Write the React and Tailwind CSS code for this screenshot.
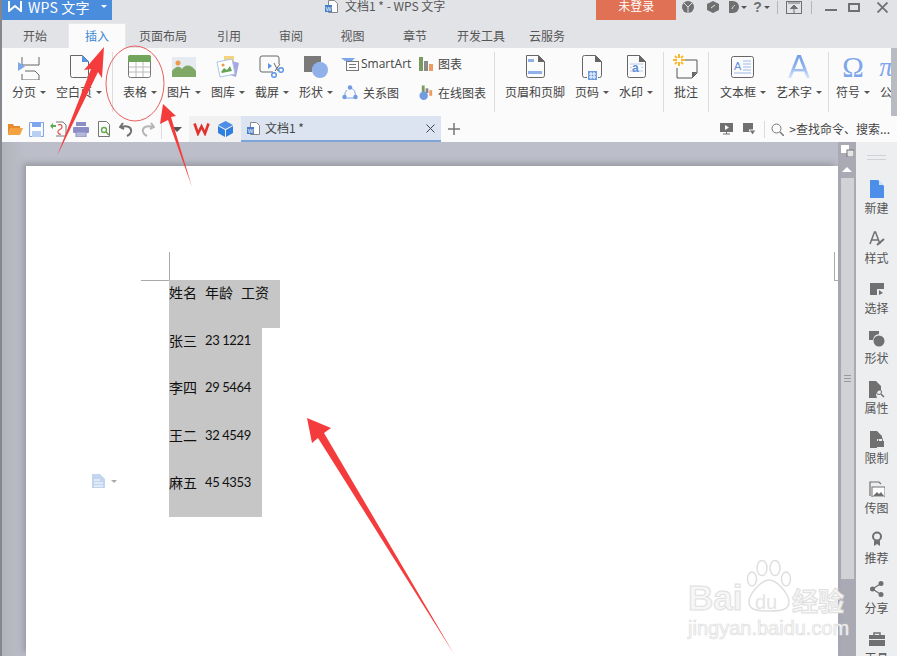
import React from "react";

const FONT = "[font-family:'Noto_Sans_CJK_SC','Liberation_Sans',sans-serif]";

function Caret({ className = "" }) {
  return <span className={`inline-block w-0 h-0 border-l-[3px] border-r-[3px] border-t-[3px] border-l-transparent border-r-transparent border-t-[#555] ${className}`} />;
}

function Svg({ w = 26, h = 26, vb, children, className = "" }) {
  return (
    <svg width={w} height={h} viewBox={vb || `0 0 ${w} ${h}`} className={`block shrink-0 ${className}`} fill="none">
      {children}
    </svg>
  );
}

const icons = {
  page: (
    <Svg w={24} h={26}>
      <path d="M5 3v8M22 3v8H5" stroke="#666" strokeWidth="1" />
      <path d="M1 8l7 4.500-7 4.500z" fill="#7ea6ea" />
      <path d="M8 17h10l4 4v5H5v-6" stroke="#666" strokeWidth="1" />
    </Svg>
  ),
  blank: (
    <Svg w={22} h={26}>
      <path d="M2.500 1.500h12l6 6v14a2 2 0 0 1-2 2h-14a2 2 0 0 1-2-2z" stroke="#666" />
      <path d="M14 1l7 7h-7z" fill="#5b93e6" />
    </Svg>
  ),
  table: (
    <Svg w={24} h={24}>
      <rect x="0.500" y="0.500" width="22" height="22" rx="2" fill="#fff" stroke="#777" />
      <path d="M0 2a2 2 0 0 1 2-2h19a2 2 0 0 1 2 2v5H0z" fill="#71a55c" />
      <path d="M1 12h21M1 17h21M8 7v15M15 7v15" stroke="#bbb" />
    </Svg>
  ),
  picture: (
    <Svg w={24} h={20}>
      <rect width="24" height="20" fill="#e6ebf2" />
      <circle cx="6" cy="6" r="2.500" fill="#f09a4f" />
      <path d="M0 20v-6c3-4 7-6 10-2 3-5 9-5 14 2v6z" fill="#7fa866" />
    </Svg>
  ),
  gallery: (
    <Svg w={24} h={24}>
      <path d="M8 1h10v14H8z" fill="#f5d27c" />
      <path d="M16 6l7 2-3 14-6-2z" fill="#a6a6e0" />
      <path d="M1 7l15-3 3 15-15 3z" fill="#fff" stroke="#aac4e8" />
      <path d="M5 17l3-4 3 2 3-4 2 5-10 2z" fill="#68a457" />
      <circle cx="7" cy="10" r="1.600" fill="#ef9b4f" />
    </Svg>
  ),
  screenshot: (
    <Svg w={26} h={24}>
      <path d="M14 17H3a2 2 0 0 1-2-2V3a2 2 0 0 1 2-2h15a2 2 0 0 1 2 2v6" stroke="#666" />
      <path d="M9 8l4 3-4 3z" fill="#5b93e6" />
      <path d="M15 8l4 8M21 9l-5 7" stroke="#666" />
      <circle cx="15" cy="20" r="2.300" stroke="#5b93e6" strokeWidth="1.400" />
      <circle cx="22" cy="15" r="2.300" stroke="#5b93e6" strokeWidth="1.400" />
    </Svg>
  ),
  shape: (
    <Svg w={26} h={24}>
      <path d="M1 1h17v6a9 9 0 0 0-9 10H1z" fill="#7a7a7a" />
      <circle cx="17" cy="15" r="8" fill="#8fb0e8" />
    </Svg>
  ),
  header: (
    <Svg w={22} h={26}>
      <path d="M2.500 1.500h12l6 6v14a2 2 0 0 1-2 2h-14a2 2 0 0 1-2-2z" stroke="#666" />
      <path d="M14 1l7 7h-7z" fill="#666" />
      <path d="M4 5h6v3H4zM4 17h14v3H4z" fill="#8fb0e8" />
    </Svg>
  ),
  pagenum: (
    <Svg w={22} h={26}>
      <path d="M6 23.500H3.500a2 2 0 0 1-2-2v-18a2 2 0 0 1 2-2h11l6 6v14a2 2 0 0 1-2 2H17" stroke="#666" />
      <path d="M14 1l7 7h-7z" fill="#666" />
      <rect x="7" y="17" width="9" height="9" fill="#6f9be0" />
      <path d="M10 18v7M13 18v7M8 20h7M8 23h7" stroke="#fff" />
    </Svg>
  ),
  watermark: (
    <Svg w={22} h={26}>
      <path d="M2.500 1.500h12l6 6v14a2 2 0 0 1-2 2h-14a2 2 0 0 1-2-2z" stroke="#666" />
      <path d="M14 1l7 7h-7z" fill="#666" />
      <path d="M5 10h13M5 17h13M5 13.500h2M16 13.500h2" stroke="#b9cdf0" />
      <text x="7" y="18" fontSize="12" fontWeight="700" fill="#5f8fd8" fontFamily="Liberation Sans">a</text>
    </Svg>
  ),
  comment: (
    <Svg w={26} h={26}>
      <path d="M9 6h15v13l-5 5H4V14" stroke="#555" />
      <path d="M24 18h-5v6z" fill="#666" />
      <g stroke="#f5b82e" strokeWidth="2">
        <path d="M6 0v4M6 8v4M0 6h4M8 6h4M2 2l2 2M8 8l2 2M10 2L8 4M4 8l-2 2" />
      </g>
    </Svg>
  ),
  textbox: (
    <Svg w={24} h={22}>
      <rect x="0.500" y="0.500" width="22" height="21" rx="2" stroke="#666" />
      <text x="3" y="14" fontSize="11" fill="#5f8fd8" fontFamily="Liberation Sans">A</text>
      <path d="M12 5h8M12 8h8M12 11h8M12 14h8M3 17h17" stroke="#9cb9e8" />
    </Svg>
  ),
  arttext: (
    <span className="block text-[33px] leading-[26px] text-transparent bg-clip-text bg-gradient-to-b from-[#6f9de6] via-[#8db2ee] to-[#e8effb] [font-family:'Liberation_Sans',sans-serif]">A</span>
  ),
  omega: (
    <span className="block text-[29px] leading-[26px] text-[#7ea6ea] [font-family:'Liberation_Serif',serif]">Ω</span>
  ),
  formula: (
    <span className="block text-[27px] leading-[26px] italic text-[#7ea6ea] [font-family:'Liberation_Serif',serif]">π</span>
  ),
};

function RibbonItem({ w, icon, label, caret = true, iconClass = "", className = "" }) {
  return (
    <div className={`flex flex-col items-center shrink-0 ${className}`} style={{ width: w }}>
      <div className={`h-[30px] flex items-center justify-center ${iconClass}`}>{icon}</div>
      <div className="mt-[1px] h-[18px] flex items-center gap-[4px] text-[12px] text-[#444] whitespace-nowrap">
        {label}
        {caret && <Caret />}
      </div>
    </div>
  );
}

function Sep({ className = "" }) {
  return <div className={`w-px self-stretch bg-[#dcdcdc] shrink-0 ${className}`} />;
}

function SmallRow({ icon, label, latin }) {
  return (
    <div className="h-[18px] flex items-center gap-[4px] text-[12px] text-[#444] whitespace-nowrap">
      {icon}
      <span className={latin ? "[font-family:'Open_Sans',sans-serif] text-[12px] -ml-[2px]" : ""}>{label}</span>
    </div>
  );
}

function Tab({ w, label, active }) {
  return (
    <div
      className={`h-full flex items-center justify-center text-[12px] shrink-0 ${active ? "bg-[#fbfbfb] text-[#3b87d4] border border-b-0 border-[#e8e8ea]" : "text-[#555]"}`}
      style={{ width: w }}
    >
      {label}
    </div>
  );
}

function SideItem({ icon, label }) {
  return (
    <div className="h-[50px] shrink-0 flex flex-col items-center">
      <div className="h-[20px] flex items-center justify-center">{icon}</div>
      <div className="text-[12px] leading-[16px] text-[#555] mt-[1px]">{label}</div>
    </div>
  );
}

const G = "#707070";
const side = [
  ["新建", <Svg w={14} h={18}><path d="M0 0h8l6 6v12H0z" fill="#4d8fe8" /><path d="M9 0l5 5H9z" fill="#cfe0f7" /></Svg>],
  ["样式", <Svg w={16} h={16}><path d="M1 13L5.500 1h1L11 13M3 9h6" stroke={G} strokeWidth="1.500" /><path d="M8 14l7-6" stroke={G} strokeWidth="2" /></Svg>],
  ["选择", <Svg w={14} h={12}><path d="M0 0h14v6H9l-2 0v6H0z" fill={G} /><path d="M9 7l4 3-4 2z" fill={G} /></Svg>],
  ["形状", <Svg w={16} h={16}><path d="M0 0h10v3a7 7 0 0 0-6 6H0z" fill={G} /><circle cx="10" cy="10" r="5.500" fill={G} /></Svg>],
  ["属性", <Svg w={16} h={17}><path d="M0 0h7l5 5v4a5 5 0 0 0-4 8H0z" fill={G} /><circle cx="10" cy="11" r="2.500" stroke={G} /><path d="M12 13l3 3" stroke={G} strokeWidth="1.500" /></Svg>],
  ["限制", <Svg w={14} h={17}><path d="M0 0h7l5 5v3H7v9H0z" fill={G} /><rect x="7" y="10" width="7" height="6" fill={G} /><path d="M8.500 10V8.500a2 2 0 0 1 4 0V10" stroke={G} /></Svg>],
  ["传图", <Svg w={16} h={16}><path d="M1 15V1h9l2 2" stroke={G} strokeWidth="1.200" /><rect x="3" y="6" width="13" height="10" fill="#fff" stroke={G} /><path d="M4 15l4-4 2 2 2-2 3 4z" fill={G} /></Svg>],
  ["推荐", <Svg w={12} h={16}><circle cx="6" cy="5.500" r="4" stroke={G} strokeWidth="2" /><path d="M3 9.500V15l3-2 3 2V9.500" fill={G} /></Svg>],
  ["分享", <Svg w={14} h={16}><circle cx="11" cy="2.500" r="2.500" fill={G} /><circle cx="2.500" cy="8" r="2.500" fill={G} /><circle cx="11" cy="13.500" r="2.500" fill={G} /><path d="M11 2.500L2.500 8l8.500 5.500" stroke={G} strokeWidth="1.200" /></Svg>],
  ["工具", <Svg w={16} h={14}><path d="M5 3V1h6v2" stroke={G} strokeWidth="1.500" /><path d="M0 3h16v4H0zM0 8h16v6H0z" fill={G} /></Svg>],
];

function DocIcon() {
  return (
    <Svg w={15} h={15}>
      <path d="M4.500 1.500h6l3 3v9h-9z" fill="#fff" stroke="#888" />
      <rect x="1" y="6" width="7" height="7" fill="#4a7fc8" />
      <text x="1.800" y="12" fontSize="6" fill="#fff" fontFamily="Liberation Sans">W</text>
    </Svg>
  );
}

export default function App() {
  return (
    <div className={`relative w-[897px] h-[656px] overflow-hidden flex flex-col bg-[#e2e3e7] border-l-2 border-[#85878c] ${FONT}`}>
      {/* Title bar */}
      <div className="h-[23px] shrink-0 flex items-start bg-[#e2e3e7]">
        <div className="w-[110px] h-[20px] bg-[#4a8ddc] flex items-start pt-[1px] text-white shrink-0 overflow-hidden">
          <Svg w={14} h={11} vb="0 0 14 11" className="ml-[6px] mr-[6px]"><path d="M1 0v10l6-5 6 5V0" stroke="#fff" strokeWidth="2" /></Svg>
          <span className="text-[14px] leading-[12px] whitespace-nowrap tracking-[0.2px]">WPS 文字</span>
          <Caret className="ml-[11px] mt-[4px] border-t-white" />
        </div>
        <div className="flex items-center ml-[212px] -mt-[1px] h-[14px] shrink-0">
          <DocIcon />
          <span className="ml-[6px] text-[12px] text-[#555] whitespace-nowrap">文档1 * - WPS 文字</span>
        </div>
        <div className="ml-[151px] w-[80px] h-[20px] bg-[#e07154] text-white text-[12px] leading-[12px] flex justify-center shrink-0">未登录</div>
        <div className="flex items-center h-[14px] shrink-0 text-[#707070]">
          <Svg w={14} h={14} className="ml-[5px]"><circle cx="7" cy="7" r="6" fill="#707070" /><path d="M3 3l4 4 4-4M7 7v6" stroke="#e2e3e7" /></Svg>
          <Svg w={14} h={14} className="ml-[11px]"><path d="M7 1l6 3v6l-6 3-6-3V4z" fill="#707070" /><path d="M5 8l4-3" stroke="#e2e3e7" /></Svg>
          <Svg w={12} h={14} className="ml-[8px]"><path d="M1 1h4a6 6 0 0 1 0 12H1z" fill="#707070" /><path d="M4 9c1-3 2-3 3-4" stroke="#e2e3e7" /></Svg>
          <Caret className="ml-[1px]" />
          <span className="ml-[6px] text-[14px] font-bold leading-[14px] [font-family:'Liberation_Sans',sans-serif]">?</span>
          <Caret className="ml-[2px]" />
          <div className="ml-[7px] w-px h-[13px] bg-[#b5b5b5]" />
          <Svg w={16} h={13} className="ml-[8px]"><rect x="0.500" y="0.500" width="15" height="12" stroke="#707070" /><path d="M2 2h12" stroke="#707070" /><path d="M8 4l-3.500 3.500h7zM8 7v5" fill="#707070" stroke="#707070" /></Svg>
          <div className="ml-[9px] w-px h-[13px] bg-[#b5b5b5]" />
          <div className="ml-[13px] w-[12px] h-[2px] bg-[#707070] mt-[5px]" />
          <div className="ml-[11px] w-[12px] h-[9px] border-2 border-[#707070]" />
          <Svg w={11} h={11} className="ml-[17px]"><path d="M0.500 0.500l10 10M10.500 0.500l-10 10" stroke="#707070" strokeWidth="1.800" /></Svg>
        </div>
      </div>

      {/* Tabs */}
      <div className="h-[25px] shrink-0 flex items-stretch">
        <Tab w={66} label="开始" />
        <Tab w={58} label="插入" active />
        <Tab w={74} label="页面布局" />
        <Tab w={58} label="引用" />
        <Tab w={66} label="审阅" />
        <Tab w={57} label="视图" />
        <Tab w={68} label="章节" />
        <Tab w={64} label="开发工具" />
        <Tab w={68} label="云服务" />
      </div>

      {/* Ribbon */}
      <div className="h-[68px] shrink-0 flex bg-[#fbfbfb]">
        <div className="flex-1 min-w-0 overflow-hidden flex items-stretch pl-[4px] py-[4px]">
          <RibbonItem w={46} icon={icons.page} label="分页" />
          <RibbonItem w={54} icon={icons.blank} label="空白页" />
          <Sep className="ml-[6px]" />
          <RibbonItem w={44} icon={icons.table} label="表格" className="ml-[5px]" />
          <RibbonItem w={44} icon={icons.picture} label="图片" />
          <RibbonItem w={44} icon={icons.gallery} label="图库" />
          <RibbonItem w={44} icon={icons.screenshot} label="截屏" />
          <RibbonItem w={44} icon={icons.shape} label="形状" />
          <div className="w-[79px] shrink-0 pl-[3px] flex flex-col gap-[11px] pt-[3px]">
            <SmallRow latin label="SmartArt" icon={<Svg w={18} h={14}><path d="M0 1h14l-3 3H4z" fill="#7ea6ea" /><rect x="5.500" y="4.500" width="12" height="9" stroke="#777" /><path d="M8 7.500h7M8 10.500h7" stroke="#777" /></Svg>} />
            <SmallRow label="关系图" icon={<Svg w={18} h={16}><path d="M9 3a6 6 0 0 1 5 8M4 11a6 6 0 0 1 2-6M5 13h8" stroke="#7ea6ea" /><circle cx="9" cy="2.500" r="2.200" fill="#6f9be0" /><circle cx="3.500" cy="12" r="2.200" fill="#6f9be0" /><circle cx="14.500" cy="12" r="2.200" fill="#6f9be0" /></Svg>} />
          </div>
          <div className="w-[77px] shrink-0 pl-[2px] flex flex-col gap-[11px] pt-[3px]">
            <SmallRow label="图表" icon={<Svg w={15} h={14}><rect x="0" y="0" width="4" height="14" fill="#7d9a5e" /><rect x="5" y="4" width="4" height="10" fill="#8a8a8a" /><rect x="10" y="7" width="4" height="7" fill="#ee9a62" /></Svg>} />
            <SmallRow label="在线图表" icon={<Svg w={15} h={16} vb="0 0 16 16"><rect x="3" y="0" width="3" height="8" fill="#7d9a5e" /><rect x="7" y="3" width="3" height="5" fill="#8a8a8a" /><rect x="11" y="5" width="3" height="6" fill="#ee9a62" /><circle cx="5" cy="11" r="4.500" fill="#6f9be0" /></Svg>} />
          </div>
          <Sep />
          <RibbonItem w={80} icon={icons.header} label="页眉和页脚" caret={false} />
          <RibbonItem w={34} icon={icons.pagenum} label="页码" />
          <RibbonItem w={54} icon={icons.watermark} label="水印" />
          <Sep />
          <RibbonItem w={44} icon={icons.comment} label="批注" caret={false} />
          <Sep />
          <RibbonItem w={60} icon={icons.textbox} label="文本框" className="ml-[4px]" />
          <RibbonItem w={52} icon={icons.arttext} label="艺术字" />
          <Sep className="ml-[3px]" />
          <RibbonItem w={48} icon={icons.omega} label="符号" />
          <RibbonItem w={30} icon={icons.formula} label="公式" caret={false} iconClass="-translate-x-[6px]" />
        </div>
        <div className="w-[6px] shrink-0 bg-[#b9bbc3]" />
      </div>

      {/* Quick access + doc tabs */}
      <div className="h-[26px] shrink-0 flex items-center bg-[#fbfbfb]">
        <div className="flex items-center shrink-0 pl-[5px] gap-[6px] w-[187px] h-full">
          <Svg w={16} h={14}><path d="M1 2h5l1 2h6v2H4L1 13z" fill="#e98a2c" /><path d="M4 6h12l-3 7H1z" fill="#f2a23f" /></Svg>
          <Svg w={15} h={15}><rect x="0.500" y="0.500" width="14" height="14" rx="1" stroke="#7ea6ea" strokeWidth="1.200" fill="#fff" /><rect x="3" y="0" width="9" height="5" fill="#7ea6ea" /><rect x="3" y="9" width="9" height="6" fill="#b9cff2" /></Svg>
          <Svg w={17} h={16}><path d="M6 1h7l3 3v11H6" stroke="#777" /><path d="M0 5l3-3v2h3v2H3v2z" fill="#5cab50" /><path d="M8 4c4-2 6 3 1 5-2 1-1 5 2 4" stroke="#d9534f" strokeWidth="1.200" /></Svg>
          <Svg w={16} h={15}><rect x="3" y="0" width="10" height="4" fill="#8b8fc4" /><rect x="0" y="5" width="16" height="6" rx="1" fill="#8b8fc4" /><rect x="3" y="10" width="10" height="5" fill="#b6b9dc" stroke="#8b8fc4" /></Svg>
          <Svg w={14} h={16} className="ml-[2px]"><path d="M1.500 0.500h8l3 3v12h-11z" stroke="#777" /><circle cx="7" cy="9" r="2.500" stroke="#67a94e" strokeWidth="1.400" /><path d="M9 11l3 3" stroke="#67a94e" strokeWidth="1.600" /></Svg>
          <Svg w={15} h={15} className="ml-[2px]"><path d="M4 1L1 5l4 2M2 5c6-2 11 0 10 5-.5 2-2 3-4 4" stroke="#707070" strokeWidth="2" /></Svg>
          <Svg w={15} h={15}><path d="M11 1l3 4-4 2M13 5C7 3 2 5 3 10c.5 2 2 3 4 4" stroke="#b5b5b5" strokeWidth="2" /></Svg>
          <div className="w-px h-[20px] bg-[#dcdcdc]" />
          <span className="w-0 h-0 ml-[4px] border-l-[5px] border-r-[5px] border-t-[5px] border-l-transparent border-r-transparent border-t-[#555]" />
        </div>
        <div className="w-[52px] h-full shrink-0 bg-[#f1f1f1] flex items-center pl-[4px] gap-[9px]">
          <Svg w={17} h={14}><path d="M1.500 1.500l3.500 10 3.500-7 3.500 7 3.500-10" stroke="#e1322f" strokeWidth="2.600" /></Svg>
          <Svg w={15} h={16} className="-ml-[1px]"><path d="M7.500 0L15 4 7.500 8 0 4z" fill="#4d8fe8" /><path d="M0 5l7 4v7l-7-4zM15 5L8 9v7l7-4z" fill="#2f7fe0" /></Svg>
        </div>
        <div className="w-[200px] h-full shrink-0 bg-[#dbe4f0] border-b-2 border-[#7da5d8] flex items-center pl-[5px] pr-[6px]">
          <DocIcon />
          <span className="ml-[4px] text-[12px] text-[#444] flex-1">文档1 *</span>
          <Svg w={9} h={9}><path d="M0.500 0.500l8 8M8.500 0.500l-8 8" stroke="#444" /></Svg>
        </div>
        <Svg w={12} h={12} className="ml-[7px]"><path d="M6 0v12M0 6h12" stroke="#777" strokeWidth="1.500" /></Svg>
        <div className="flex-1" />
        <div className="flex items-center shrink-0 h-full pr-[7px]">
          <Svg w={13} h={12}><rect width="13" height="9" fill="#707070" /><path d="M5 2l4 2.500L5 7z" fill="#fbfbfb" /><path d="M3 11h7M6.500 9v2" stroke="#707070" /></Svg>
          <Svg w={13} h={12} className="ml-[10px]"><rect width="10" height="9" fill="#707070" /><path d="M6 7h7l-3.500 5z" fill="#707070" stroke="#fbfbfb" /></Svg>
          <div className="w-px h-[17px] bg-[#dcdcdc] ml-[8px]" />
          <Svg w={13} h={13} className="ml-[6px]"><circle cx="5.500" cy="5.500" r="4.500" stroke="#777" /><path d="M9 9l4 4" stroke="#777" strokeWidth="1.500" /></Svg>
          <span className="ml-[5px] text-[12px] text-[#444] whitespace-nowrap">&gt;查找命令、搜索...</span>
        </div>
      </div>

      {/* Workspace */}
      <div className="flex-1 min-h-0 flex bg-[#bcbfc9]">
        <div className="w-[24px] shrink-0 bg-gradient-to-r from-[#b2b4bd] to-[#bcbfc9]" />
        <div className="w-[812px] shrink-0 mt-[24px] bg-white relative shadow-[-3px_-3px_6px_rgba(110,110,120,0.45)]">
          {/* Crop marks */}
          <div className="absolute left-[143px] top-[86px] w-px h-[28px] bg-[#aaa]" />
          <div className="absolute left-[115px] top-[114px] w-[28px] h-px bg-[#aaa]" />
          <div className="absolute left-[808px] top-[86px] w-px h-[29px] bg-[#aaa]" />
          <div className="absolute left-[808px] top-[114px] w-[4px] h-px bg-[#aaa]" />
          {/* Margin icon */}
          <div className="absolute left-[66px] top-[308px] flex items-center gap-[6px]">
            <Svg w={13} h={14}><path d="M0 0h8l5 5v9H0z" fill="#c3d4ee" /><path d="M2 6h6M2 9h9M2 12h9" stroke="#fff" /></Svg>
            <span className="w-0 h-0 border-l-[3px] border-r-[3px] border-t-[3px] border-l-transparent border-r-transparent border-t-[#aaa]" />
          </div>
          {/* Selected text */}
          <div className="ml-[143px] mt-[114px] flex flex-col items-start text-[#111]">
            <div className="w-[111px] h-[48px] bg-[#c6c6c6] text-[14px] leading-[24px] whitespace-nowrap flex gap-[8px]">
              <span>姓名</span><span>年龄</span><span>工资</span>
            </div>
            <div className="w-[93px] h-[189px] bg-[#c6c6c6] flex flex-col">
              {[["张三", "23 1221"], ["李四", "29 5464"], ["王二", "32 4549"], ["麻五", "45 4353"]].map(([n, v]) => (
                <div key={n} className="h-[47.250px] flex items-start leading-[24px] text-[14px]">
                  <span>{n}</span>
                  <span className="ml-[8px] text-[13px] tracking-[-0.4px] [font-family:'Lato',sans-serif]">{v}</span>
                </div>
              ))}
            </div>
          </div>
        </div>

        {/* Scrollbar */}
        <div className="w-[18px] shrink-0 bg-[#a9aab4] flex flex-col items-center pt-[3px]">
          <Svg w={13} h={12}><rect x="0" y="0" width="8" height="8" fill="#fff" /><rect x="6" y="5" width="7" height="7" fill="#e4e4e8" stroke="#777" /></Svg>
          <span className="mt-[10px] w-0 h-0 border-l-[5px] border-r-[5px] border-b-[5px] border-l-transparent border-r-transparent border-b-white" />
          <div className="mt-[6px] w-[13px] h-[401px] bg-[#d0d2d6] flex flex-col items-center justify-center gap-[2px]">
            <div className="w-[7px] h-px bg-[#999]" />
            <div className="w-[7px] h-px bg-[#999]" />
            <div className="w-[7px] h-px bg-[#999]" />
          </div>
        </div>

        {/* Right sidebar */}
        <div className="flex-1 min-w-0 bg-[#edeef0] flex flex-col items-stretch overflow-hidden">
          <div className="mx-[11px] mt-[13px] mb-[19px] h-[5px] border-y border-[#d0d1d6] shrink-0" />
          {side.map(([label, icon]) => (
            <SideItem key={label} label={label} icon={icon} />
          ))}
        </div>
      </div>

      {/* Baidu watermark */}
      <div className="absolute left-[686px] top-[560px] w-[170px] h-[80px] pointer-events-none">
        <Svg w={50} h={52} className="absolute left-[56px] top-0">
          <g fill="#fff" stroke="#dfdfdf" strokeWidth="1.500">
            <ellipse cx="8" cy="19" rx="4.500" ry="7" />
            <ellipse cx="18" cy="8" rx="5" ry="7.500" />
            <ellipse cx="31" cy="8" rx="5" ry="7.500" />
            <ellipse cx="42" cy="19" rx="4.500" ry="7" />
            <path d="M25 20c8 0 20 14 20 22 0 8-8 9-20 9S5 50 5 42c0-8 12-22 20-22z" />
          </g>
        </Svg>
        <span className="absolute left-0 top-[21px] text-[35px] leading-[34px] font-bold text-[#f6f6f6] [-webkit-text-stroke:1px_#e0e0e0] [font-family:'Liberation_Sans',sans-serif]">Bai</span>
        <span className="absolute left-[67px] top-[31px] text-[20px] leading-[22px] text-[#e4e4e4] [font-family:'Liberation_Sans',sans-serif]">du</span>
        <span className="absolute left-[104px] top-[24px] text-[26px] leading-[32px] font-bold tracking-[0px] text-[#f6f6f6] [-webkit-text-stroke:1px_#e0e0e0]">经验</span>
        <span className="absolute left-0 top-[56px] text-[20px] leading-[24px] whitespace-nowrap text-[#f8f8f8] [-webkit-text-stroke:0.700px_#e0e0e0] [font-family:'Liberation_Sans',sans-serif]">jingyan.baidu.com</span>
      </div>

      {/* Annotations */}
      <svg className="absolute left-[-2px] top-0 pointer-events-none" width="897" height="656" viewBox="0 0 897 656" fill="none">
        <ellipse cx="135" cy="83.500" rx="29" ry="37.500" stroke="#ea5f5f" strokeWidth="1" />
        <path d="M104 47L102 78 98 72 57 156 91 69 84 70z" fill="#f53c3c" />
        <path d="M163 104L176 116 171 117 192 187 168 120 160 124z" fill="#f53c3c" />
        <path d="M307 418L331 428 324 433 454 654 318 438 312 443z" fill="#f53c3c" />
      </svg>
    </div>
  );
}
